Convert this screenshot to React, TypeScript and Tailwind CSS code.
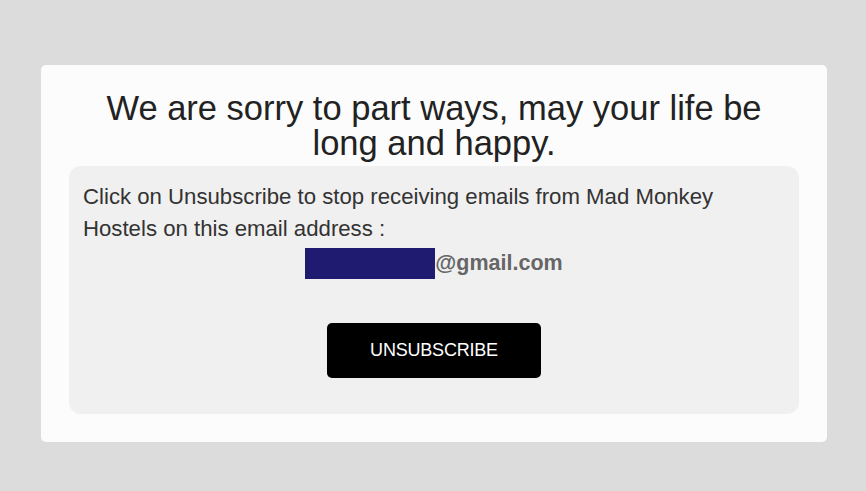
export default function App() {
  return (
    <div
      className="min-h-[491px] w-full bg-[#dcdcdc] pt-[65px] pb-[49px]"
      style={{ fontFamily: '"Liberation Sans", Arial, sans-serif' }}
    >
      <div className="ml-[41px] w-[786px] rounded-[5px] bg-[#fcfcfc] px-[28px] pt-[26px] pb-[28px]">
        <h1 className="text-center text-[34.5px] leading-[35px] font-normal text-[#222]">
          We are sorry to part ways, may your life be
          <br />
          long and happy.
        </h1>
        <div className="mt-[5px] rounded-[12px] bg-[#f0f0f0] px-[14px] pt-[15px] pb-[36px]">
          <p className="max-w-[660px] text-[22.2px] leading-[32px] text-[#333]">
            Click on Unsubscribe to stop receiving emails from Mad Monkey Hostels on this email
            address :
          </p>
          <div className="mt-[3px] flex items-center justify-center">
            <span className="inline-block h-[31px] w-[130px] bg-[#1e1b70]" />
            <span className="text-[21.5px] leading-[31px] font-bold text-[#666]">@gmail.com</span>
          </div>
          <div className="mt-[44px] flex justify-center">
            <button className="flex h-[55px] w-[214px] items-center justify-center rounded-[5px] bg-black text-[18px] tracking-[-0.2px] text-white">
              UNSUBSCRIBE
            </button>
          </div>
        </div>
      </div>
    </div>
  );
}
